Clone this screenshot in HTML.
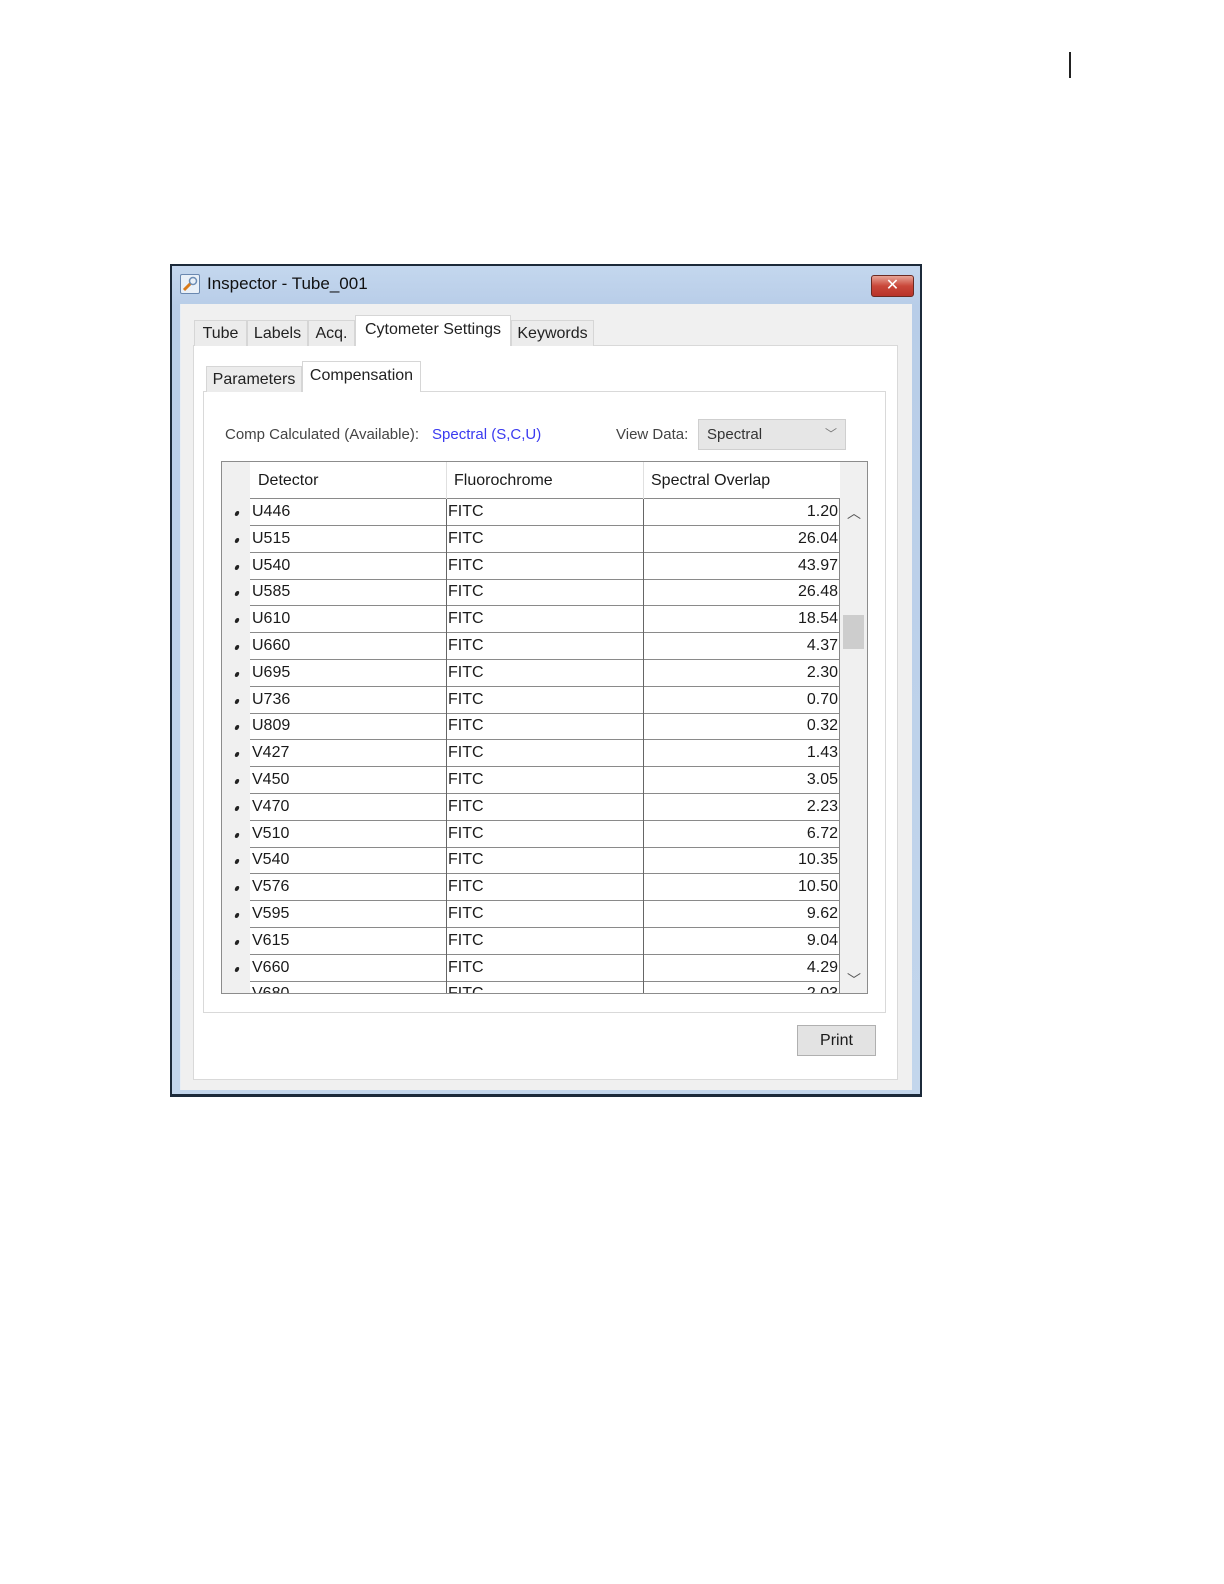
<!DOCTYPE html>
<html><head><meta charset="utf-8"><style>
*{margin:0;padding:0;box-sizing:border-box}
body{width:1224px;height:1584px;background:#fff;position:relative;font-family:"Liberation Sans","DejaVu Sans",sans-serif;color:#1a1a1a;overflow:hidden}
.a{position:absolute}
.tab{position:absolute;background:#ececec;border:1px solid #d6d6d6;border-bottom:none;font-size:16px;text-align:center;color:#222}
.row{position:absolute;left:250px;width:590px;height:27px;border-bottom:1px solid #8a8a8a;font-size:16px}
.row span{position:absolute;top:4px}
</style></head><body>
<div class="a" style="left:1069px;top:52px;width:2px;height:26px;background:#222"></div>

<div class="a" style="left:170px;top:264px;width:752px;height:833px;background:#1c2a3a"></div>
<div class="a" style="left:172px;top:266px;width:748px;height:828px;background:linear-gradient(#c4d7ee,#b8cde8 40px,#c3d6ec)"></div>
<div class="a" style="left:180px;top:304px;width:732px;height:786px;background:#f0f0f0"></div>
<div class="a" style="left:180px;top:304px;width:1px;height:786px;background:#e8eef5"></div>
<!-- title -->
<div class="a" style="left:180px;top:274px;width:20px;height:20px;background:#e9f0f8;border:1px solid #6a88b0;border-radius:2px"></div>
<svg class="a" style="left:181px;top:275px" width="18" height="18"><path d="M3 15 L10 8" stroke="#d97a1a" stroke-width="3"/><circle cx="12" cy="6" r="3.5" fill="none" stroke="#6d8db5" stroke-width="1.5"/></svg>
<div class="a" style="left:207px;top:274px;font-size:17px;color:#111">Inspector - Tube_001</div>
<div class="a" style="left:871px;top:275px;width:43px;height:22px;border:1px solid #6b2a22;border-radius:3px;background:linear-gradient(#e8a597,#c9473a 50%,#b8332a);color:#fff;font-weight:bold;font-size:16px;text-align:center;line-height:20px">✕</div>

<!-- main tab panel -->
<div class="a" style="left:193px;top:345px;width:705px;height:735px;background:#fff;border:1px solid #d9d9d9"></div>
<div class="tab" style="left:194px;top:320px;width:53px;height:26px;line-height:25px">Tube</div>
<div class="tab" style="left:247px;top:320px;width:61px;height:26px;line-height:25px">Labels</div>
<div class="tab" style="left:308px;top:320px;width:47px;height:26px;line-height:25px">Acq.</div>
<div class="tab" style="left:355px;top:315px;width:156px;height:31px;line-height:28px;background:#fff">Cytometer Settings</div>
<div class="tab" style="left:511px;top:320px;width:83px;height:26px;line-height:25px">Keywords</div>

<!-- sub panel -->
<div class="a" style="left:203px;top:391px;width:683px;height:622px;background:#fff;border:1px solid #d9d9d9"></div>
<div class="tab" style="left:206px;top:366px;width:96px;height:26px;line-height:25px">Parameters</div>
<div class="tab" style="left:302px;top:361px;width:119px;height:31px;line-height:28px;background:#fff">Compensation</div>

<div class="a" style="left:225px;top:426px;font-size:15px;color:#444">Comp Calculated (Available):</div>
<div class="a" style="left:432px;top:426px;font-size:15px;color:#3a3af0">Spectral (S,C,U)</div>
<div class="a" style="left:616px;top:426px;font-size:15px;color:#444">View Data:</div>
<div class="a" style="left:698px;top:419px;width:148px;height:31px;background:#e6e6e6;border:1px solid #cfcfcf;font-size:15px;line-height:29px;padding-left:8px;color:#333">Spectral<span style="position:absolute;right:8px;top:0;font-size:12px;color:#777">﹀</span></div>

<!-- table -->
<div class="a" style="left:221px;top:461px;width:647px;height:533px;background:#f0f0f0;border:1px solid #8c8c8c"></div>
<div class="a" style="left:250px;top:462px;width:590px;height:37px;background:#fff;border-bottom:1px solid #8a8a8a"></div>
<div class="a" style="left:446px;top:462px;width:1px;height:37px;background:#e0e0e0"></div>
<div class="a" style="left:643px;top:462px;width:1px;height:37px;background:#e0e0e0"></div>
<div class="a" style="left:258px;top:472px;font-size:16px">Detector</div>
<div class="a" style="left:454px;top:472px;font-size:16px">Fluorochrome</div>
<div class="a" style="left:651px;top:472px;font-size:16px">Spectral Overlap</div>
<div class="a" style="left:250px;top:499px;width:590px;height:494px;background:#fff;overflow:hidden" id="rows">
</div>
<div class="a" style="left:446px;top:499px;width:1px;height:494px;background:#666"></div>
<div class="a" style="left:643px;top:499px;width:1px;height:494px;background:#666"></div>
<div class="a" style="left:839px;top:499px;width:1px;height:494px;background:#888"></div>
<div class="a" style="left:843px;top:615px;width:21px;height:34px;background:#cdcdcd"></div>
<div class="a" style="left:847px;top:503px;font-size:14px;color:#555">︿</div>
<div class="a" style="left:847px;top:970px;font-size:14px;color:#555">﹀</div>

<div class="a" style="left:797px;top:1025px;width:79px;height:31px;background:#e3e3e3;border:1px solid #b0b0b0;font-size:16px;text-align:center;line-height:29px">Print</div>

<script>
var d=[["U446","1.20"],["U515","26.04"],["U540","43.97"],["U585","26.48"],["U610","18.54"],["U660","4.37"],["U695","2.30"],["U736","0.70"],["U809","0.32"],["V427","1.43"],["V450","3.05"],["V470","2.23"],["V510","6.72"],["V540","10.35"],["V576","10.50"],["V595","9.62"],["V615","9.04"],["V660","4.29"],["V680","2.03"]];
var h="",b="";
d.forEach(function(r,i){
h+='<div class="row" style="left:0;top:'+(i*26.8)+'px"><span style="left:2px">'+r[0]+'</span><span style="left:198px">FITC</span><span style="right:2px">'+r[1]+'</span></div>';
if(i<18)b+='<div class="a" style="left:235px;top:'+(511+i*26.8)+'px;width:4px;height:5px;border-radius:50%;background:#222;transform:skewX(-20deg)"></div>';
});
document.getElementById("rows").innerHTML=h;
document.body.insertAdjacentHTML("beforeend",b);
</script>
</body></html>
